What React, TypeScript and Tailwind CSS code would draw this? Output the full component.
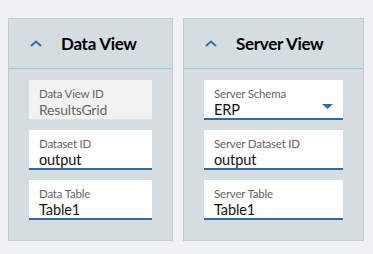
import React from 'react'

type Field = {
  label: string
  value: string
  readOnly?: boolean
  select?: boolean
}

const dataFields: Field[] = [
  { label: 'Data View ID', value: 'ResultsGrid', readOnly: true },
  { label: 'Dataset ID', value: 'output' },
  { label: 'Data Table', value: 'Table1' },
]

const serverFields: Field[] = [
  { label: 'Server Schema', value: 'ERP', select: true },
  { label: 'Server Dataset ID', value: 'output' },
  { label: 'Server Table', value: 'Table1' },
]

const Chevron = () => (
  <svg width="12" height="7" viewBox="0 0 12 7" className="shrink-0">
    <path d="M1 6 L6 1.5 L11 6" fill="none" stroke="#3a6b9c" strokeWidth="2" />
  </svg>
)

const FieldBox = ({ field }: { field: Field }) => (
  <div
    className={
      field.readOnly
        ? 'h-[40px] bg-[#f2f2f2] border-b border-[#e0e0e0] px-[10px] pt-[7px]'
        : 'h-[40px] bg-white border-b-2 border-[#2f6ba4] px-[10px] pt-[7px] relative'
    }
  >
    <div className="text-[11.5px] leading-[14px] tracking-[-0.2px] text-[#666]">{field.label}</div>
    <div
      className={
        field.readOnly
          ? 'text-[14px] leading-[18px] tracking-[-0.2px] text-[#666]'
          : 'text-[14.5px] leading-[18px] tracking-[-0.1px] text-[#111]'
      }
    >
      {field.value}
    </div>
    {field.select && (
      <svg width="11" height="6" viewBox="0 0 11 6" className="absolute right-[10px] top-[24px]">
        <path d="M0 0 H11 L5.5 5 Z" fill="#2f6ba4" />
      </svg>
    )}
  </div>
)

const Panel = ({ title, fields, width }: { title: string; fields: Field[]; width: string }) => (
  <div className={`${width} h-[223px] bg-[#d4dee0] border border-[#c6c9ca]`}>
    <div className="h-[50px] flex items-center pl-[21px] gap-[19px] border-b border-[#9fc5d3]">
      <Chevron />
      <span className="text-[17px] font-bold tracking-[-0.3px] text-black">{title}</span>
    </div>
    <div className="px-[20px] pt-[11px] flex flex-col gap-[10px]">
      {fields.map((f) => (
        <FieldBox key={f.label} field={f} />
      ))}
    </div>
  </div>
)

export default function App() {
  return (
    <div
      className="w-[373px] h-[254px] bg-[#eef2f5] pl-[8px] pt-[18px] flex gap-[10px]"
      style={{ fontFamily: 'Lato, "Open Sans", sans-serif' }}
    >
      <Panel title="Data View" fields={dataFields} width="w-[165px]" />
      <Panel title="Server View" fields={serverFields} width="w-[181px]" />
    </div>
  )
}
